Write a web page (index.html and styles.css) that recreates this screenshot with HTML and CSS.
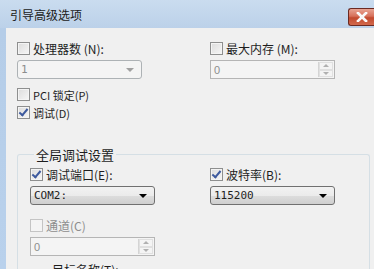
FILE: index.html
```html
<!DOCTYPE html>
<html lang="zh">
<head>
    <meta charset="UTF-8">
    <title>引导高级选项</title>
    <link rel="stylesheet" href="styles.css">
</head>
<body>
    <div class="window">
        <div class="titlebar">
            <span class="title">引导高级选项</span>
            <span class="close-btn">
                <svg width="14" height="10" viewBox="0 0 14 10">
                    <path d="M3 1 L11 9 M11 1 L3 9" stroke="#fff" stroke-width="2.6" stroke-linecap="square"/>
                    <path d="M3 1 L11 9 M11 1 L3 9" stroke="#f7f7f7" stroke-width="1.6"/>
                </svg>
            </span>
        </div>
        <div class="frame">
            <div class="content">
                <div class="grid">
                    <div class="field">
                        <label class="check"><span class="box"></span>处理器数 (N):</label>
                        <div class="combo disabled"><span>1</span><span class="arrow"></span></div>
                    </div>
                    <div class="field">
                        <label class="check"><span class="box"></span>最大内存 (M):</label>
                        <div class="spin disabled"><span>0</span><span class="spin-btns"><i class="up"></i><i class="down"></i></span></div>
                    </div>
                </div>

                <div class="options">
                    <label class="check small"><span class="box"></span>PCI 锁定(P)</label>
                    <label class="check small"><span class="box checked"></span>调试(D)</label>
                </div>

                <fieldset class="group">
                    <legend>全局调试设置</legend>
                    <div class="grid inner">
                        <div class="field">
                            <label class="check"><span class="box checked"></span>调试端口(E):</label>
                            <div class="combo"><span>COM2:</span><span class="arrow dark"></span></div>
                        </div>
                        <div class="field">
                            <label class="check"><span class="box checked"></span>波特率(B):</label>
                            <div class="combo"><span>115200</span><span class="arrow dark"></span></div>
                        </div>
                        <div class="field">
                            <label class="check off"><span class="box"></span>通道(C)</label>
                            <div class="spin disabled"><span>0</span><span class="spin-btns"><i class="up"></i><i class="down"></i></span></div>
                        </div>
                    </div>
                    <div class="last">目标名称(T):</div>
                </fieldset>
            </div>
        </div>
    </div>
</body>
</html>
```

FILE: styles.css
```css
body {
    margin: 0;
    width: 374px;
    height: 269px;
    overflow: hidden;
    font-family: "Noto Sans CJK SC", "DejaVu Sans", sans-serif;
    font-size: 12px;
    color: #1e1e1e;
}

.window {
    background: linear-gradient(to bottom, #c6d9ee, #b5cde8 30px, #b9d1ec);
    height: 269px;
}

.titlebar {
    height: 28px;
    display: flex;
    align-items: flex-start;
    justify-content: space-between;
    background: linear-gradient(to bottom, #cadcef, #bcd1e9);
}

.title {
    margin: 6px 0 0 10px;
    font-size: 12px;
    color: #202020;
}

.close-btn {
    margin-top: 8px;
    width: 26px;
    height: 18px;
    border: 1px solid #6b2a22;
    border-right: none;
    border-radius: 3px 0 0 3px;
    background: linear-gradient(to bottom, #e8a493, #d6705a 45%, #c24a2f 55%, #d2694c);
    display: flex;
    align-items: center;
    justify-content: center;
    box-sizing: border-box;
}

.frame {
    padding-left: 6px;
}

.content {
    background: #f0f0f0;
    height: 241px;
    padding: 13px 0 0 11px;
    box-sizing: border-box;
    overflow: hidden;
}

.grid {
    display: grid;
    grid-template-columns: 193px 125px;
    row-gap: 12px;
}

.field {
    display: flex;
    flex-direction: column;
    gap: 4px;
}

.check {
    display: flex;
    align-items: center;
    gap: 3px;
    height: 15px;
    font-size: 12px;
}

.check.small {
    font-size: 11px;
}

.check.off {
    color: #8d8d8d;
}

.box {
    width: 11px;
    height: 11px;
    border: 1px solid #8e8f8f;
    background: linear-gradient(135deg, #dcdcdc, #f6f6f6);
    box-shadow: inset 0 0 0 1px #f4f4f4;
    position: relative;
}

.check.off .box {
    border-color: #c4c4c4;
    background: #f4f4f4;
}

.box.checked::after {
    content: "";
    position: absolute;
    left: 3px;
    top: 0px;
    width: 3px;
    height: 7px;
    border: solid #3d5a9e;
    border-width: 0 2px 2px 0;
    transform: rotate(40deg);
}

.combo, .spin {
    width: 125px;
    height: 19px;
    box-sizing: border-box;
    border: 1px solid #707070;
    border-radius: 3px;
    display: flex;
    align-items: center;
    justify-content: space-between;
    padding-left: 3px;
    background: linear-gradient(to bottom, #f2f2f2, #ebebeb 50%, #dddddd 51%, #cfcfcf);
    font-size: 11px;
    font-family: "DejaVu Sans Mono", "Noto Sans CJK SC", monospace;
}

.combo.disabled {
    border-color: #adb2b5;
    background: #f4f4f4;
    color: #8d8d8d;
}

.spin {
    border-radius: 0;
    background: #f4f4f4;
    border-color: #b5b5b5;
    color: #8d8d8d;
    padding-right: 1px;
    font-family: "Liberation Sans", sans-serif;
}

.arrow {
    width: 0;
    height: 0;
    border-left: 4px solid transparent;
    border-right: 4px solid transparent;
    border-top: 4px solid #a0a0a0;
    margin-right: 7px;
}

.arrow.dark {
    border-top-color: #000;
}

.spin-btns {
    display: flex;
    flex-direction: column;
    width: 14px;
    height: 15px;
    border-left: 1px solid #d4d4d4;
}

.spin-btns i {
    flex: 1;
    display: flex;
    align-items: center;
    justify-content: center;
    border: 1px solid #e0e0e0;
}

.spin-btns .up::before {
    content: "";
    border-left: 3px solid transparent;
    border-right: 3px solid transparent;
    border-bottom: 3px solid #b0b0b0;
}

.spin-btns .down::before {
    content: "";
    border-left: 3px solid transparent;
    border-right: 3px solid transparent;
    border-top: 3px solid #b0b0b0;
}

.grid + .options {
    margin-top: 8px;
}

.options {
    display: flex;
    flex-direction: column;
    gap: 3px;
}

.group {
    margin: 25px 0 0 0;
    padding: 3px 0 0 12px;
    border: 1px solid #d5dfe5;
    border-radius: 3px;
    border-bottom: none;
    height: 150px;
    box-sizing: border-box;
    width: 353px;
}

.group legend {
    padding: 0 2px;
    margin-left: 4px;
    font-size: 13px;
}

.grid.inner {
    grid-template-columns: 180px 125px;
    row-gap: 13px;
}

.last {
    margin: 5px 0 0 22px;
    font-size: 12px;
}
```
